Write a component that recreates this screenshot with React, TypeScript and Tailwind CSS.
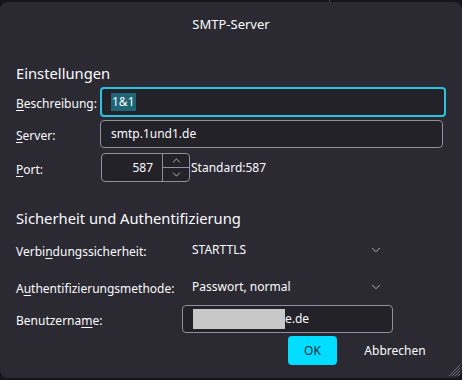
import { ChevronDown, ChevronUp } from "lucide-react";

const font = { fontFamily: '"Noto Sans", "Open Sans", sans-serif' };

function Label({ pre, u, post }: { pre: string; u: string; post: string }) {
  return (
    <span className="text-[12px] text-[#fbfbfe] whitespace-nowrap">
      {pre}
      <span className="underline underline-offset-2">{u}</span>
      {post}
    </span>
  );
}

function Select({ value }: { value: string }) {
  return (
    <div className="w-[211px] h-[30px] flex items-center justify-between pl-[10px] pr-[10px]">
      <span className="text-[12px] text-[#fbfbfe]">{value}</span>
      <ChevronDown size={14} strokeWidth={1.1} className="text-[#fbfbfe]" />
    </div>
  );
}

export default function App() {
  return (
    <div style={font} className="w-[462px] h-[380px] bg-[#16151b] overflow-hidden relative">
      {/* window behind the dialog */}
      <div className="absolute top-0 left-[329px] w-px h-[3px] bg-[#4a4952]" />
      <div className="h-[2px]" />
      <div className="h-[376px] bg-[#2b2a33] rounded-[8px] flex flex-col relative">
        <div className="h-[44px] flex items-center justify-center pt-[2px]">
          <span className="text-[13px] text-[#fbfbfe]">SMTP-Server</span>
        </div>

        <div className="px-4">
          <div className="h-[40px] flex items-end pb-[2px]">
            <span className="text-[14.75px] text-[#fbfbfe]">Einstellungen</span>
          </div>

          <div className="flex items-center h-[30px] mt-px">
            <div className="w-[84px]">
              <Label pre="" u="B" post="eschreibung:" />
            </div>
            <div className="flex-1 h-[30px] rounded-[4px] border-2 border-[#2ac3de] bg-[#232229] flex items-center pl-[9px]">
              <span className="text-[12px] text-[#fbfbfe] bg-[#1e6577] px-px">1&amp;1</span>
            </div>
          </div>

          <div className="flex items-center h-[28px] mt-[3px]">
            <div className="w-[84px]">
              <Label pre="" u="S" post="erver:" />
            </div>
            <div className="w-[343px] h-[28px] rounded-[4px] border border-[#8f8f9d] bg-[#232229] flex items-center pl-[10px]">
              <span className="text-[12px] text-[#fbfbfe]">smtp.1und1.de</span>
            </div>
          </div>

          <div className="flex items-center h-[29px] mt-[5px]">
            <div className="w-[85px]">
              <Label pre="" u="P" post="ort:" />
            </div>
            <div className="w-[89px] h-[29px] rounded-[4px] border border-[#8f8f9d] bg-[#232229] flex items-center">
              <span className="flex-1 text-right pr-[9px] text-[12px] text-[#fbfbfe]">587</span>
              <div className="w-[27px] h-[27px] border-l border-[#8f8f9d] flex flex-col">
                <div className="flex-1 flex items-center justify-center border-b border-[#8f8f9d]">
                  <ChevronUp size={13} strokeWidth={1.2} className="text-[#fbfbfe]" />
                </div>
                <div className="flex-1 flex items-center justify-center">
                  <ChevronDown size={13} strokeWidth={1.2} className="text-[#fbfbfe]" />
                </div>
              </div>
            </div>
            <span className="text-[12px] text-[#fbfbfe] ml-px">Standard:587</span>
          </div>

          <div className="h-[48px] flex items-end pb-[1px]">
            <span className="text-[14.75px] text-[#fbfbfe]">Sicherheit und Authentifizierung</span>
          </div>

          <div className="flex items-center h-[30px] mt-[5px]">
            <div className="w-[166px]">
              <Label pre="Verbi" u="n" post="dungssicherheit:" />
            </div>
            <Select value="STARTTLS" />
          </div>

          <div className="flex items-center h-[30px] mt-[7px]">
            <div className="w-[166px]">
              <Label pre="A" u="u" post="thentifizierungsmethode:" />
            </div>
            <Select value="Passwort, normal" />
          </div>

          <div className="flex items-center h-[28px] mt-[3px]">
            <div className="w-[166px]">
              <Label pre="Benutzerna" u="m" post="e:" />
            </div>
            <div className="w-[211px] h-[28px] rounded-[4px] border border-[#8f8f9d] bg-[#232229] flex items-center pl-[10px]">
              <span className="inline-block w-[92px] h-[20px] bg-[#c8c8c8]" />
              <span className="text-[12px] text-[#fbfbfe]">e.de</span>
            </div>
          </div>

          <div className="flex justify-end items-center gap-[8px] mt-[3px] pr-[1px]">
            <button className="w-[49px] h-[29px] rounded-[4px] bg-[#00ddff] text-[12px] text-[#2b2a33]">
              OK
            </button>
            <button className="w-[100px] h-[29px] rounded-[4px] text-[12px] text-[#fbfbfe]">
              Abbrechen
            </button>
          </div>
        </div>

        {/* resize grip */}
        <svg className="absolute right-[1px] bottom-[1px]" width="14" height="14" viewBox="0 0 14 14">
          <path d="M13 2 L2 13 M13 5 L5 13 M13 8 L8 13 M13 11 L11 13" stroke="#6b6a72" strokeWidth="1" />
        </svg>
      </div>
    </div>
  );
}
